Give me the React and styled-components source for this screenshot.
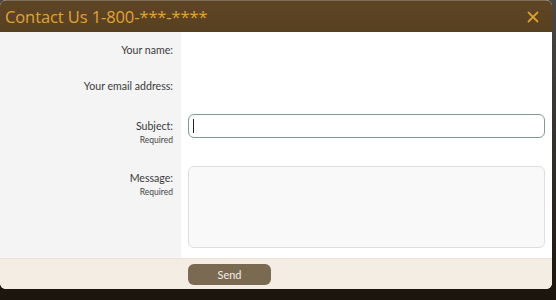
import React from 'react'
import { styled, createGlobalStyle } from 'styled-components'

const Global = createGlobalStyle`
  html, body { margin: 0; padding: 0; }
  body {
    width: 556px;
    height: 300px;
    overflow: hidden;
    background: linear-gradient(180deg, #4a4744 0%, #2e2a26 60%, #1b140d 100%);
    font-family: "Open Sans", "Noto Sans", sans-serif;
  }
`

const Page = styled.div`
  padding: 0 4px 11px 0;
`

const Dialog = styled.div`
  width: 552px;
  height: 289px;
  border-radius: 6px;
  overflow: hidden;
  display: flex;
  flex-direction: column;
  background: #fff;
`

const Header = styled.div`
  height: 32px;
  flex: none;
  box-sizing: border-box;
  border-top: 1px solid #7d6e5c;
  background: linear-gradient(180deg, #5e4526 0%, #574020 100%);
  display: flex;
  align-items: center;
  justify-content: space-between;
  padding: 0 13px 0 5px;
`

const Title = styled.h1`
  margin: 0;
  font-size: 16.5px;
  font-weight: 400;
  color: #e2a434;
  letter-spacing: -0.1px;
`

const Close = styled.button`
  border: none;
  background: none;
  padding: 0;
  width: 12px;
  height: 12px;
  display: flex;
  cursor: pointer;
`

const Body = styled.div`
  flex: 1;
  display: flex;
  flex-direction: column;
`

const Row = styled.div`
  display: flex;
`

const LabelCell = styled.div`
  width: 181px;
  flex: none;
  box-sizing: border-box;
  background: #f4f4f4;
  text-align: right;
  padding: ${p => (p.$top ? '14px 8px 10px 0' : '10px 8px 10px 0')};
`

const Label = styled.label`
  display: block;
  font-family: Lato, "Open Sans", sans-serif;
  font-size: 10.6px;
  line-height: 16px;
  color: #3a3a3a;
`

const Hint = styled.div`
  font-family: Lato, "Open Sans", sans-serif;
  font-size: 8.5px;
  line-height: 12px;
  color: #444;
`

const FieldCell = styled.div`
  flex: 1;
  padding: 10px 7px 10px 7px;
`

const SubjectBox = styled.div`
  height: 24px;
  box-sizing: border-box;
  border: 1px solid #7f9c94;
  border-radius: 6px;
  background: #fff;
`

const Caret = styled.span`
  display: block;
  width: 1px;
  height: 14px;
  background: #222;
  margin: 4px 0 0 4px;
`

const MessageBox = styled.div`
  height: 82px;
  box-sizing: border-box;
  border: 1px solid #dedede;
  border-radius: 6px;
  background: #f9f9f9;
`

const Footer = styled.div`
  flex: 1;
  background: #f4ede4;
  border-top: 1px solid #ebe3d8;
  padding: 3px 0 0 188px;
`

const Send = styled.button`
  width: 83px;
  height: 21px;
  border: none;
  border-radius: 6px;
  background: #7b6a52;
  color: #f2ede4;
  font-family: Lato, "Open Sans", sans-serif;
  font-size: 11px;
  cursor: pointer;
`

export default function App() {
  return (
    <>
      <Global />
      <Page>
        <Dialog>
          <Header>
            <Title>Contact Us 1-800-***-****</Title>
            <Close aria-label="Close">
              <svg width="12" height="12" viewBox="0 0 12 12">
                <path d="M1.5 1.5 L10.5 10.5 M10.5 1.5 L1.5 10.5" stroke="#dc9d2e" strokeWidth="1.8" strokeLinecap="round" />
              </svg>
            </Close>
          </Header>
          <Body>
            <Row>
              <LabelCell><Label>Your name:</Label></LabelCell>
              <FieldCell />
            </Row>
            <Row>
              <LabelCell><Label>Your email address:</Label></LabelCell>
              <FieldCell />
            </Row>
            <Row>
              <LabelCell $top>
                <Label>Subject:</Label>
                <Hint>Required</Hint>
              </LabelCell>
              <FieldCell>
                <SubjectBox><Caret /></SubjectBox>
              </FieldCell>
            </Row>
            <Row>
              <LabelCell $top>
                <Label>Message:</Label>
                <Hint>Required</Hint>
              </LabelCell>
              <FieldCell>
                <MessageBox />
              </FieldCell>
            </Row>
          </Body>
          <Footer>
            <Send>Send</Send>
          </Footer>
        </Dialog>
      </Page>
    </>
  )
}
